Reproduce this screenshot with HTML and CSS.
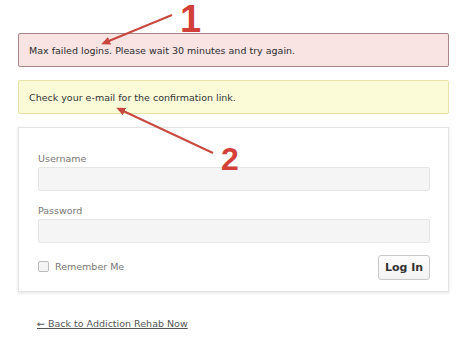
FILE: index.html
```html
<!DOCTYPE html>
<html>
<head>
<meta charset="utf-8">
<link rel="stylesheet" href="styles.css">
</head>
<body>
<div class="page">
  <div class="msg error">Max failed logins. Please wait 30 minutes and try again.</div>
  <div class="msg notice">Check your e-mail for the confirmation link.</div>
  <form class="login">
    <label class="field-label">Username</label>
    <div class="input"></div>
    <label class="field-label pw">Password</label>
    <div class="input"></div>
    <div class="actions">
      <label class="remember"><span class="check"></span>Remember Me</label>
      <span class="btn">Log In</span>
    </div>
  </form>
  <a class="back" href="#">← Back to Addiction Rehab Now</a>
</div>
<svg class="notes" width="474" height="347" viewBox="0 0 474 347">
  <defs>
    <marker id="ah" markerWidth="9" markerHeight="8" refX="6" refY="4" orient="auto" markerUnits="userSpaceOnUse">
      <path d="M0,0 L9,4 L0,8 Z" fill="#c8483f"/>
    </marker>
  </defs>
  <line x1="172" y1="15" x2="104" y2="43" stroke="#c8483f" stroke-width="2" marker-end="url(#ah)"/>
  <line x1="213" y1="153" x2="119" y2="109" stroke="#c8483f" stroke-width="2" marker-end="url(#ah)"/>
  <text x="180" y="32" class="num n1">1</text>
  <text x="221" y="170" class="num n2">2</text>
</svg>
</body>
</html>
```
FILE: styles.css
```css
html, body {
  margin: 0;
  padding: 0;
  background: #ffffff;
}
body {
  font-family: "DejaVu Sans", Verdana, sans-serif;
  font-size: 9.5px;
  color: #333;
  width: 474px;
  height: 347px;
  overflow: hidden;
  position: relative;
}
.page {
  padding: 33px 25px 0 18px;
  width: 431px;
}
.msg {
  box-sizing: border-box;
  height: 34px;
  padding: 0 10px;
  display: flex;
  align-items: center;
  border-radius: 2px;
  margin-bottom: 13px;
}
.msg.error {
  background: #f9e3e3;
  border: 1px solid #a98585;
  color: #2e2e2e;
}
.msg.notice {
  background: #fcfbd8;
  border: 1px solid #e7e3a6;
  color: #333;
}
.login {
  box-sizing: border-box;
  margin: 0;
  height: 165px;
  border: 1px solid #e4e4e4;
  box-shadow: 0 1px 3px rgba(0,0,0,0.12);
  background: #fff;
  padding: 25px 18px 0 19px;
  display: flex;
  flex-direction: column;
}
.field-label {
  color: #777;
  font-size: 9.5px;
  line-height: 12px;
  margin-bottom: 2px;
}
.field-label.pw {
  margin-top: 14px;
}
.input {
  height: 24px;
  box-sizing: border-box;
  background: #f5f5f5;
  border: 1px solid #e6e6e6;
  border-radius: 2px;
}
.actions {
  display: flex;
  justify-content: space-between;
  align-items: flex-start;
  margin-top: 12px;
}
.remember {
  display: flex;
  align-items: center;
  color: #777;
  margin-top: 6px;
  font-size: 9.5px;
}
.check {
  width: 9px;
  height: 9px;
  border: 1px solid #bbb;
  border-radius: 2px;
  background: #f4f4f4;
  margin-right: 6px;
}
.btn {
  box-sizing: border-box;
  width: 52px;
  height: 25px;
  border: 1px solid #c9c9c9;
  border-radius: 3px;
  background: linear-gradient(#fefefe, #f2f2f2);
  font-weight: bold;
  font-size: 11px;
  color: #333;
  display: flex;
  align-items: center;
  justify-content: center;
}
.back {
  display: inline-block;
  margin: 26px 0 0 19px;
  color: #555;
  font-size: 9.5px;
  text-decoration: underline;
}
.notes {
  position: absolute;
  left: 0;
  top: 0;
  pointer-events: none;
}
.num {
  font-family: "Liberation Sans", Arial, sans-serif;
  font-weight: bold;
  fill: #d3403a;
}
.n1 { font-size: 38px; }
.n2 { font-size: 32px; }
```
